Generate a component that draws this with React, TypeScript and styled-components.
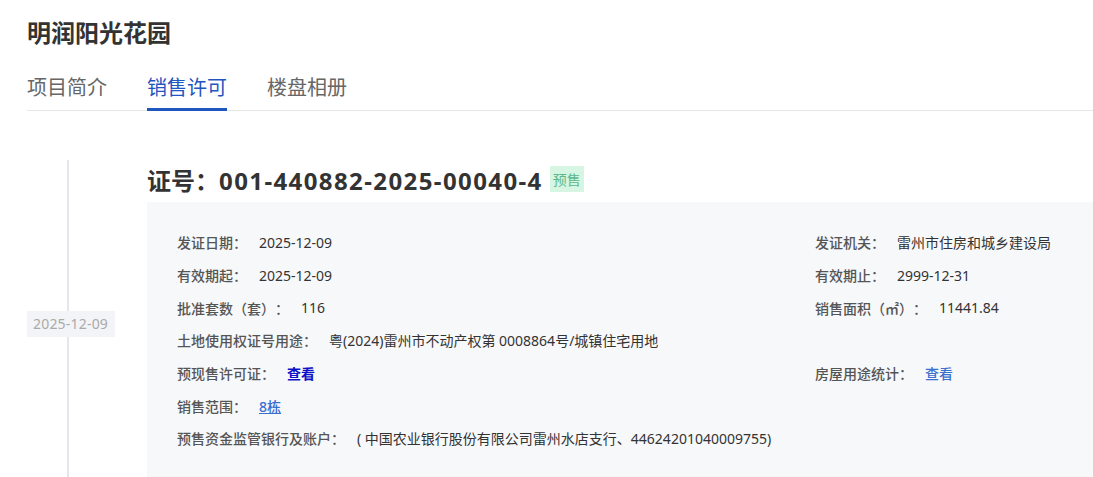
import * as React from 'react';
import styled, { createGlobalStyle } from 'styled-components';

const GlobalStyle = createGlobalStyle`
    html, body {
        margin: 0;
        padding: 0;
        background: #fff;
        font-family: "Noto Sans", "Noto Sans CJK SC", sans-serif;
        color: #333;
        text-spacing-trim: space-all;
    }
`;

const Page = styled.div`
    padding: 14px 0 0 27px;
    overflow: hidden;
`;

const Title = styled.h1`
    margin: 0;
    font-family: "Noto Sans CJK SC", sans-serif;
    font-size: 24px;
    line-height: 36px;
    font-weight: 700;
    color: #333;
`;

const TabBar = styled.div`
    display: flex;
    gap: 40px;
    margin-top: 24px;
    border-bottom: 1px solid #e6e7ea;
`;

const Tab = styled.div<{ $active?: boolean }>`
    position: relative;
    font-family: "Noto Sans CJK SC", sans-serif;
    font-size: 20px;
    line-height: 26px;
    padding-bottom: 10px;
    color: ${p => (p.$active ? '#1f56c0' : '#666')};

    &::after {
        content: '';
        display: ${p => (p.$active ? 'block' : 'none')};
        position: absolute;
        left: 0;
        right: 0;
        bottom: -1px;
        height: 3px;
        background: #1f56c0;
    }
`;

const Timeline = styled.div`
    display: grid;
    grid-template-columns: 120px 1fr;
    margin-top: 49px;
`;

const Rail = styled.div`
    position: relative;
    display: flex;
    align-items: center;

    &::before {
        content: '';
        position: absolute;
        left: 40px;
        top: 0;
        bottom: -40px;
        width: 2px;
        background: #e4e6eb;
    }
`;

const DateLabel = styled.div`
    position: relative;
    background: #f3f4f7;
    color: #aaa;
    font-size: 14px;
    line-height: 26px;
    padding: 0 7px 0 6px;
    margin-top: -6px;
    letter-spacing: 0.2px;
`;

const Heading = styled.div`
    display: flex;
    align-items: center;
    gap: 7px;
    height: 40px;
    margin-top: -1px;
`;

const CertNo = styled.span`
    font-size: 24px;
    font-weight: 700;
    color: #333;
`;

const CertDigits = styled.span`
    letter-spacing: 1.4px;
`;

const Tag = styled.span`
    font-family: "Noto Sans CJK SC", sans-serif;
    background: #d6f5e3;
    color: #5cb887;
    font-size: 14px;
    line-height: 26px;
    padding: 0 3px;
`;

const InfoBox = styled.div`
    display: grid;
    grid-template-columns: 638px 1fr;
    grid-auto-rows: 32.7px;
    align-items: center;
    background: #f7f8fa;
    margin-top: 3px;
    padding: 24px 0 40px 30px;
`;

const Item = styled.div<{ $wide?: boolean }>`
    display: flex;
    align-items: center;
    font-size: 14px;
    white-space: nowrap;
    ${p => (p.$wide ? 'grid-column: 1 / -1;' : '')}
`;

const Label = styled.span`
    color: #555;
    font-weight: 500;
    margin-right: 12px;
`;

const Value = styled.span`
    color: #333;
`;

const Link = styled.a<{ $tone?: 'dark' | 'light'; $underline?: boolean }>`
    color: ${p => (p.$tone === 'dark' ? '#1010c8' : '#3a6fd0')};
    font-weight: ${p => (p.$tone === 'dark' ? 600 : 500)};
    text-decoration: ${p => (p.$underline ? 'underline' : 'none')};
    cursor: pointer;
`;

const Empty = styled.div``;

export default function App() {
    return (
        <Page>
            <GlobalStyle />
            <Title>明润阳光花园</Title>
            <TabBar>
                <Tab>项目简介</Tab>
                <Tab $active>销售许可</Tab>
                <Tab>楼盘相册</Tab>
            </TabBar>
            <Timeline>
                <Rail>
                    <DateLabel>2025-12-09</DateLabel>
                </Rail>
                <div>
                    <Heading>
                        <CertNo>证号：<CertDigits>001-440882-2025-00040-4</CertDigits></CertNo>
                        <Tag>预售</Tag>
                    </Heading>
                    <InfoBox>
                        <Item><Label>发证日期：</Label><Value>2025-12-09</Value></Item>
                        <Item><Label>发证机关：</Label><Value>雷州市住房和城乡建设局</Value></Item>
                        <Item><Label>有效期起：</Label><Value>2025-12-09</Value></Item>
                        <Item><Label>有效期止：</Label><Value>2999-12-31</Value></Item>
                        <Item><Label>批准套数（套）：</Label><Value>116</Value></Item>
                        <Item><Label>销售面积（㎡）：</Label><Value>11441.84</Value></Item>
                        <Item $wide><Label>土地使用权证号用途：</Label><Value>粤(2024)雷州市不动产权第 0008864号/城镇住宅用地</Value></Item>
                        <Item><Label>预现售许可证：</Label><Link $tone="dark">查看</Link></Item>
                        <Item><Label>房屋用途统计：</Label><Link $tone="light">查看</Link></Item>
                        <Item><Label>销售范围：</Label><Link $tone="light" $underline>8栋</Link></Item>
                        <Empty />
                        <Item $wide><Label>预售资金监管银行及账户：</Label><Value>( 中国农业银行股份有限公司雷州水店支行、44624201040009755)</Value></Item>
                    </InfoBox>
                </div>
            </Timeline>
        </Page>
    );
}
